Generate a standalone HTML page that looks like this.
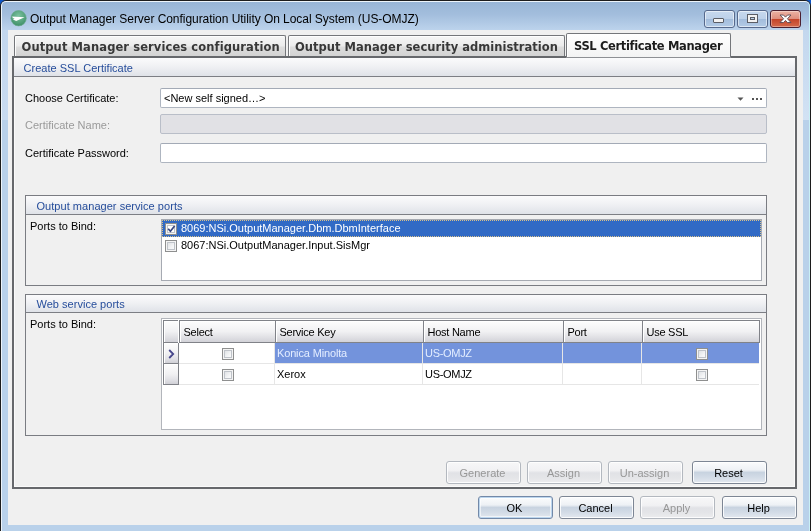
<!DOCTYPE html>
<html>
<head>
<meta charset="utf-8">
<title>Output Manager Server Configuration Utility</title>
<style>
html,body{margin:0;padding:0;}
body{width:811px;height:531px;overflow:hidden;background:#0d55c6;position:relative;
  font-family:"Liberation Sans",sans-serif;font-size:11px;color:#000;}
.abs{position:absolute;}
#win{position:absolute;left:0;top:0;width:809px;height:540px;border:1px solid #1c1c1c;border-radius:6px 6px 0 0;
  background:#b9d1ea;overflow:hidden;will-change:transform;}
#winhi{position:absolute;left:0;top:0;width:807px;height:540px;border:1px solid rgba(255,255,255,.75);border-radius:5px 5px 0 0;border-right-color:#c9f0f6;}
#titlebar{position:absolute;left:1px;top:1px;width:807px;height:28px;background:linear-gradient(#98b5d6 0,#a3bedd 45%,#bcd3ec 100%);}
#frameL{position:absolute;left:1px;top:29px;width:6px;height:90px;background:linear-gradient(#c3d7ee,#c9dbf0);}
#frameR{position:absolute;left:802px;top:29px;width:6px;height:90px;background:linear-gradient(#c3d7ee,#d2e2f4);}
#title{position:absolute;left:29px;top:10px;height:16px;line-height:16px;font-size:12px;letter-spacing:-0.05px;white-space:nowrap;color:#000;}
#client{position:absolute;left:7px;top:29px;width:795px;height:495px;background:#f0f0f0;}
/* caption buttons */
.cbtn{position:absolute;top:9px;width:29px;height:16px;border:1px solid #56698c;border-radius:3px;
  background:linear-gradient(#c7d9ee 0,#bdd1e9 48%,#a3bddc 52%,#b3cbe6 100%);box-shadow:inset 0 0 0 1px rgba(255,255,255,.55);}
#bclose{border-color:#4b2030;background:linear-gradient(#ecb3a4 0,#df8f7e 48%,#c4452a 52%,#d4694c 100%);box-shadow:inset 0 0 0 1px rgba(255,255,255,.35);}
/* tabs */
.tab{position:absolute;top:5px;height:22px;border:1px solid #74767a;border-bottom:none;border-radius:2px 2px 0 0;
  background:linear-gradient(#f6f6f6 0,#ececec 45%,#dcdcdc 55%,#d2d2d2 100%);box-shadow:inset 1px 1px 0 rgba(255,255,255,.9);
  font-family:"DejaVu Sans","Liberation Sans",sans-serif;font-weight:bold;font-size:11.5px;line-height:21px;white-space:nowrap;color:#383838;box-sizing:border-box;}
.tab span{position:absolute;left:0;top:0;}
.tab.act{top:3px;height:24px;background:linear-gradient(#ffffff,#f3f3f3);color:#1c1c1c;z-index:3;box-shadow:inset 1px 1px 0 #fff,0 1px 0 #8e9094;}
#page{position:absolute;left:4px;top:26px;width:781px;height:429px;border:2px solid #66686c;border-left-color:transparent;background:#f0f0f0;background-clip:padding-box;box-shadow:inset 0 0 0 1px #fafafa;}
.hdr{position:absolute;left:0;top:0;height:18px;border-bottom:1px solid #7c7e84;background:linear-gradient(#fbfbfc 0,#eff0f3 50%,#dfe2e8 100%);
  color:#264d9b;line-height:21px;white-space:nowrap;}
.lbl{position:absolute;white-space:nowrap;line-height:13px;height:13px;}
.dis{color:#9a9a9a;}
.inp{position:absolute;left:146px;width:605px;height:18px;border:1px solid #aeb5c0;border-top-color:#a3aab6;border-radius:2px;background:#fff;}
.grp{position:absolute;left:11px;width:740px;border:1px solid #7a7c82;background:#f0f0f0;}
/* buttons */
.btn{position:absolute;width:73px;height:21px;border:1px solid #7d8694;border-radius:3px;box-shadow:inset 0 0 0 1px rgba(255,255,255,.85);
  background:linear-gradient(#fbfcfd 0,#eef1f5 38%,#c8d3e0 50%,#d2dbe6 72%,#e3e8ef 100%);text-align:center;line-height:23px;white-space:nowrap;box-sizing:content-box;padding-right:2px;width:71px;}
.btn.off{border-color:#b3b8bf;color:#979797;background:linear-gradient(#f7f7f8 0,#f1f1f3 40%,#e1e2e6 52%,#e4e5e8 75%,#ececee 100%);}
.btn.def{border-color:#7389a8;box-shadow:inset 0 0 0 1px #bcd6ee, inset 0 0 0 2px rgba(255,255,255,.6);}
/* checkbox */
.cb{position:absolute;width:10px;height:10px;border:1px solid #8e8f8f;background:linear-gradient(135deg,#d6d9dd 0,#f4f5f6 60%,#ffffff 100%);box-shadow:inset 0 0 0 1px #f4f4f4, inset 0 0 0 2px #bfc3c9;}
.gh{position:absolute;top:1px;height:21px;border:1px solid #808288;border-right:none;background:linear-gradient(#fdfdfd 0,#f1f1f3 50%,#e2e2e6 75%,#d2d2d8 100%);box-shadow:inset 1px 1px 0 #fff;line-height:21px;white-space:nowrap;}
.gh span{position:absolute;left:3.5px;top:1px;letter-spacing:-0.25px;}
.rh{position:absolute;left:1px;width:14px;height:20px;border:1px solid #808288;border-top:none;background:linear-gradient(#fdfdfd 0,#f1f1f3 50%,#e0e0e5 80%,#d0d0d6 100%);box-shadow:inset 1px 1px 0 #fff;}
</style>
</head>
<body>
<div id="win">
  <div id="titlebar"></div>
  <div id="frameL"></div><div id="frameR"></div>
  <div id="winhi"></div>
  <svg class="abs" style="left:9px;top:9px" width="18" height="18" viewBox="0 0 18 18">
    <defs><radialGradient id="g1" cx="50%" cy="35%" r="65%"><stop offset="0" stop-color="#7cc3a0"/><stop offset="1" stop-color="#3f9068"/></radialGradient></defs>
    <circle cx="8.6" cy="8.2" r="7.7" fill="url(#g1)" stroke="#6aa98b" stroke-width=".6"/>
    <path d="M1.6 6.6 L14.6 7.3 L6.2 10.9 L3.0 9.6 L4.6 8.6 L1.8 8.0 L3.2 7.3 Z" fill="#fff"/>
  </svg>
  <div id="title">Output Manager Server Configuration Utility On Local System (US-OMJZ)</div>
  <div class="cbtn" style="left:703px"><div class="abs" style="left:8px;top:7px;width:9px;height:3px;background:#f2f2f2;border:1px solid #5b5e66;border-radius:1px;box-sizing:content-box"></div></div>
  <div class="cbtn" style="left:736px"><div class="abs" style="left:10px;top:4px;width:5px;height:3px;border:2px solid #f2f2f2;outline:1px solid #5b5e66;box-shadow:inset 0 0 0 1px #5b5e66"></div></div>
  <div class="cbtn" id="bclose" style="left:769px">
    <svg class="abs" style="left:8px;top:2px" width="13" height="11" viewBox="0 0 14 12"><path d="M1 2.2 L4.8 2.2 L7 4.5 L9.2 2.2 L13 2.2 L9.1 6.3 L13 10.4 L9.2 10.4 L7 8.1 L4.8 10.4 L1 10.4 L4.9 6.3 Z" fill="#fff" stroke="#5a4a55" stroke-width="1" stroke-linejoin="round"/></svg>
  </div>

  <div id="client">
    <!-- tabs (coords relative to client: client origin = 8,30 on screen) -->
    <div class="tab" style="left:6px;width:272px"><span style="left:6.5px;top:1px;letter-spacing:0.1px">Output Manager services configuration</span></div>
    <div class="tab" style="left:280px;width:277px"><span style="left:6px;top:1px;letter-spacing:0.03px">Output Manager security administration</span></div>
    <div class="tab act" style="left:558px;width:165px"><span style="left:7px;top:2px;letter-spacing:-0.35px">SSL Certificate Manager</span></div>

    <div class="abs" style="left:3.6px;top:26px;width:2px;height:433px;background:#66686c"></div>
    <div id="page">
      <div class="hdr" style="width:781px"><span style="position:absolute;left:9.5px;letter-spacing:0.02px">Create SSL Certificate</span></div>

      <div class="lbl" style="left:11px;top:34px">Choose Certificate:</div>
      <div class="inp" style="top:30px;height:18px"><span class="lbl" style="left:3px;top:3px">&lt;New self signed…&gt;</span>
        <svg class="abs" style="left:576px;top:8px" width="8" height="5" viewBox="0 0 8 5"><path d="M0.5 0.5 L6.5 0.5 L3.5 3.8 Z" fill="#555"/></svg>
        <div class="abs" style="left:591px;top:9px;width:2px;height:2px;background:#555"></div>
        <div class="abs" style="left:595px;top:9px;width:2px;height:2px;background:#555"></div>
        <div class="abs" style="left:599px;top:9px;width:2px;height:2px;background:#555"></div>
      </div>
      <div class="lbl dis" style="left:11px;top:60.5px">Certificate Name:</div>
      <div class="inp" style="top:56px;height:18px;background:#e1e1e5;border-color:#b9bec8"></div>
      <div class="lbl" style="left:11px;top:89px">Certificate Password:</div>
      <div class="inp" style="top:85px"></div>

      <!-- group 1 -->
      <div class="grp" style="top:137px;height:89px">
        <div class="hdr" style="width:740px;height:18px;line-height:21px"><span style="position:absolute;left:10.5px;letter-spacing:0.04px">Output manager service ports</span></div>
        <div class="lbl" style="left:4px;top:24px">Ports to Bind:</div>
        <div class="abs" style="left:135px;top:23px;width:599px;height:60px;border:1px solid #a6aab2;background:#fff">
          <div class="abs" style="left:0px;top:0px;width:599px;height:17px;background:#316ac5;outline:1px dotted #d8c08a;outline-offset:-1px"></div>
          <div class="cb" style="left:3px;top:3px;background:#fff"></div>
          <svg class="abs" style="left:5px;top:5px" width="9" height="9" viewBox="0 0 9 9"><path d="M1.2 3.8 L3.4 6.2 L7.6 1.0" fill="none" stroke="#38467e" stroke-width="1.7"/></svg>
          <div class="lbl" style="left:19px;top:2px;color:#fff">8069:NSi.OutputManager.Dbm.DbmInterface</div>
          <div class="cb" style="left:3px;top:20px"></div>
          <div class="lbl" style="left:19px;top:19px">8067:NSi.OutputManager.Input.SisMgr</div>
        </div>
      </div>

      <!-- group 2 -->
      <div class="grp" style="top:236px;height:140px">
        <div class="hdr" style="width:740px;height:17px;line-height:18px"><span style="position:absolute;left:10.5px;letter-spacing:0.02px">Web service ports</span></div>
        <div class="lbl" style="left:4px;top:23px">Ports to Bind:</div>
        <div id="grid" class="abs" style="left:135px;top:23px;width:599px;height:110px;border:1px solid #b2b5bb;background:#fff">
          <div class="gh" style="left:1px;width:14px"></div>
          <div class="gh" style="left:17px;width:95px"><span>Select</span></div>
          <div class="gh" style="left:113px;width:147px"><span>Service Key</span></div>
          <div class="gh" style="left:261px;width:139px"><span>Host Name</span></div>
          <div class="gh" style="left:401px;width:78px"><span>Port</span></div>
          <div class="gh" style="left:480px;width:116px;border-right:1px solid #808288"><span>Use SSL</span></div>
          <div class="rh" style="top:24px"><svg class="abs" style="left:4px;top:6px" width="8" height="10" viewBox="0 0 8 10"><path d="M1.2 1 L5.2 5 L1.2 9" fill="none" stroke="#47478c" stroke-width="1.8"/></svg></div>
          <div class="rh" style="top:45px"></div>
          <div class="abs" style="left:113px;top:24px;width:484px;height:20px;background:#7393dc"></div>
          <div class="abs" style="left:17px;top:44px;width:580px;height:1px;background:#e6e6e6"></div>
          <div class="abs" style="left:17px;top:65px;width:580px;height:1px;background:#e6e6e6"></div>
          <div class="abs" style="left:112px;top:24px;width:1px;height:42px;background:#e6e6e6"></div>
          <div class="abs" style="left:260px;top:24px;width:1px;height:42px;background:#e6e6e6"></div>
          <div class="abs" style="left:400px;top:24px;width:1px;height:42px;background:#e6e6e6"></div>
          <div class="abs" style="left:479px;top:24px;width:1px;height:42px;background:#e6e6e6"></div>
          <div class="cb" style="left:60px;top:29px"></div>
          <div class="cb" style="left:60px;top:50px"></div>
          <div class="cb" style="left:534px;top:29px"></div>
          <div class="cb" style="left:534px;top:50px"></div>
          <div class="lbl" style="left:115px;top:28px;color:#e3edff;letter-spacing:-0.15px">Konica Minolta</div>
          <div class="lbl" style="left:263px;top:28px;color:#e3edff;letter-spacing:-0.3px">US-OMJZ</div>
          <div class="lbl" style="left:115px;top:49px">Xerox</div>
          <div class="lbl" style="left:263px;top:49px;letter-spacing:-0.3px">US-OMJZ</div>
        </div>
      </div>

      <div class="btn off" style="left:432px;top:403px">Generate</div>
      <div class="btn off" style="left:513px;top:403px">Assign</div>
      <div class="btn off" style="left:594px;top:403px">Un-assign</div>
      <div class="btn" style="left:678px;top:403px">Reset</div>
    </div>

    <div class="btn def" style="left:470px;top:466px">OK</div>
    <div class="btn" style="left:551px;top:466px">Cancel</div>
    <div class="btn off" style="left:632px;top:466px">Apply</div>
    <div class="btn" style="left:714px;top:466px">Help</div>
  </div>
</div>
</body>
</html>
